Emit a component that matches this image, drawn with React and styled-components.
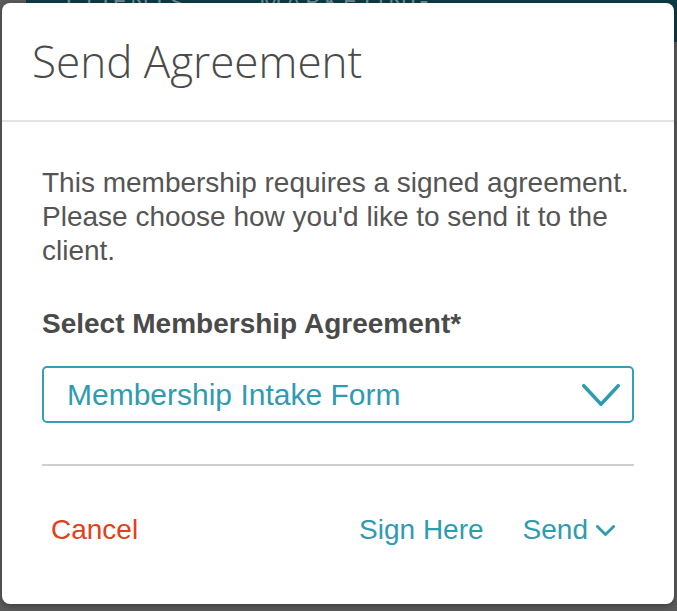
import React from "react";
import styled, { createGlobalStyle } from "styled-components";

const GlobalStyle = createGlobalStyle`
  html, body { margin: 0; padding: 0; }
  body {
    width: 677px;
    height: 611px;
    overflow: hidden;
    background: #5b5b5b;
    font-family: "Liberation Sans", Arial, sans-serif;
  }
`;

const Page = styled.div`
  position: relative;
  width: 677px;
  height: 611px;
  background: #5b5b5b;
`;

const TopBar = styled.div`
  display: flex;
  height: 42px;
  background: #0e3b43;
`;

const TopBarLogo = styled.div`
  width: 26px;
  background: #5b5b5b;
`;

const TopBarNav = styled.div`
  display: flex;
  gap: 72px;
  padding-left: 40px;
  margin-top: -17px;
  font-family: "Open Sans", sans-serif;
  font-size: 26px;
  letter-spacing: 3px;
  color: #6f8f94;
`;

const Modal = styled.div`
  position: absolute;
  left: 2px;
  top: 3px;
  width: 672px;
  height: 601px;
  background: #ffffff;
  border-radius: 8px;
  box-shadow: 0 2px 6px rgba(0, 0, 0, 0.35);
  display: flex;
  flex-direction: column;
`;

const Header = styled.div`
  display: flex;
  align-items: center;
  padding: 0 30px;
  border-bottom: 2px solid #e3e3e3;
  box-sizing: border-box;
  height: 119px;
`;

const Title = styled.h2`
  margin: 0;
  margin-top: -2px;
  font-family: "Open Sans", sans-serif;
  font-weight: 300;
  font-size: 44px;
  color: #4a4a4a;
`;

const Body = styled.div`
  padding: 44px 40px 0;
  display: flex;
  flex-direction: column;
`;

const Message = styled.p`
  margin: 0;
  font-size: 28px;
  line-height: 34px;
  color: #555555;
`;

const Label = styled.div`
  margin-top: 39px;
  font-size: 28px;
  line-height: 34px;
  font-weight: bold;
  color: #4a4a4a;
`;

const Select = styled.div`
  margin-top: 25px;
  height: 57px;
  box-sizing: border-box;
  border: 2px solid #34a0b6;
  border-radius: 5px;
  display: flex;
  align-items: center;
  justify-content: space-between;
  padding: 0 12px 0 23px;
  color: #2f9bb1;
  font-size: 30px;
`;

const Divider = styled.hr`
  margin: 41px 0 0;
  border: none;
  border-top: 2px solid #cfcfcf;
`;

const Footer = styled.div`
  display: flex;
  justify-content: space-between;
  align-items: center;
  padding: 40px 50px 0 40px;
`;

const Actions = styled.div`
  display: flex;
  gap: 21px;
`;

const TextButton = styled.button`
  border: none;
  background: none;
  padding: 8px 9px;
  font-family: "Liberation Sans", Arial, sans-serif;
  font-size: 28px;
  line-height: 32px;
  color: ${(p) => (p.$danger ? "#e2401c" : "#2f9bb1")};
  display: flex;
  align-items: center;
  gap: 8px;
  cursor: pointer;
`;

const Chevron = ({ w, h, sw }) => (
  <svg width={w} height={h} viewBox={`0 0 ${w} ${h}`} fill="none">
    <path
      d={`M${sw / 2} ${sw / 2} L${w / 2} ${h - sw / 2} L${w - sw / 2} ${sw / 2}`}
      stroke="#2f9bb1"
      strokeWidth={sw}
      strokeLinecap="round"
      strokeLinejoin="round"
    />
  </svg>
);

export default function App() {
  return (
    <>
      <GlobalStyle />
      <Page>
        <TopBar>
          <TopBarLogo />
          <TopBarNav>
            <span>CLIENTS</span>
            <span>MARKETING</span>
          </TopBarNav>
        </TopBar>
        <Modal>
          <Header>
            <Title>Send Agreement</Title>
          </Header>
          <Body>
            <Message>
              This membership requires a signed agreement. Please choose how
              you'd like to send it to the client.
            </Message>
            <Label>Select Membership Agreement*</Label>
            <Select>
              <span>Membership Intake Form</span>
              <Chevron w={38} h={22} sw={3.5} />
            </Select>
            <Divider />
          </Body>
          <Footer>
            <TextButton $danger>Cancel</TextButton>
            <Actions>
              <TextButton>Sign Here</TextButton>
              <TextButton>
                Send
                <Chevron w={19} h={11} sw={2.8} />
              </TextButton>
            </Actions>
          </Footer>
        </Modal>
      </Page>
    </>
  );
}
